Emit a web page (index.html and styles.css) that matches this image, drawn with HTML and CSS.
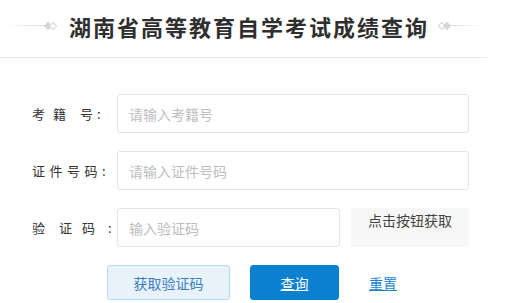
FILE: index.html
```html
<!DOCTYPE html>
<html lang="zh-CN">
<head>
<meta charset="utf-8">
<title>湖南省高等教育自学考试成绩查询</title>
<link rel="stylesheet" href="styles.css">
</head>
<body>
<div class="page">
  <header class="head">
    <span class="deco deco-left">
      <span class="line line-l"></span>
      <span class="dia dia-fill"></span>
      <span class="dia dia-out"></span>
    </span>
    <h1 class="title">湖南省高等教育自学考试成绩查询</h1>
    <span class="deco deco-right">
      <span class="dia dia-out"></span>
      <span class="dia dia-fill"></span>
      <span class="line line-r"></span>
    </span>
  </header>
  <form class="form">
    <div class="row">
      <label class="label"><span class="c c1a">考</span><span class="c c1b">籍</span><span class="c c1c">号</span><span class="colon">:</span></label>
      <input class="field" type="text" placeholder="请输入考籍号">
    </div>
    <div class="row">
      <label class="label"><span class="c c2">证</span><span class="c c2">件</span><span class="c c2">号</span><span class="c c2">码</span><span class="colon">:</span></label>
      <input class="field" type="text" placeholder="请输入证件号码">
    </div>
    <div class="row">
      <label class="label"><span class="c c3a">验</span><span class="c c3b">证</span><span class="c c3c">码</span><span class="colon">:</span></label>
      <input class="field field-short" type="text" placeholder="输入验证码">
      <div class="captcha">点击按钮获取</div>
    </div>
    <div class="actions">
      <button type="button" class="btn btn-get">获取验证码</button>
      <button type="button" class="btn btn-query">查询</button>
      <a class="reset" href="#">重置</a>
    </div>
  </form>
</div>
</body>
</html>
```
FILE: styles.css
```css
* { box-sizing: border-box; }
html, body { margin: 0; padding: 0; background: #fff; }
body {
  font-family: "Noto Sans CJK SC", "Microsoft YaHei", "Noto Sans", sans-serif;
  color: #333;
}
.page { width: 487px; }
.head {
  height: 58px;
  border-bottom: 1px solid #e8e8e8;
  display: flex;
  align-items: center;
  padding: 0 0 6px 5px;
}
.title {
  margin: 0 0 0 14px;
  font-size: 22px;
  font-weight: bold;
  letter-spacing: 2px;
  line-height: 30px;
  color: #2f2f2f;
  white-space: nowrap;
}
.deco { display: flex; align-items: center; }
.deco-right { margin-left: 11px; }
.line { display: block; height: 1px; }
.line-l { width: 40px; background: linear-gradient(to right, #fff, #d8d8d8); }
.line-r { width: 33px; background: linear-gradient(to left, #fff, #d8d8d8); }
.dia {
  display: block;
  width: 6px;
  height: 6px;
  transform: rotate(45deg);
}
.dia-fill { background: #d6d6d6; }
.dia-out { border: 1px solid #d6d6d6; background: #fff; margin: 0 -1px; }
.form { padding: 36px 0 0 32px; }
.row {
  display: flex;
  align-items: center;
  height: 39px;
  margin-bottom: 18px;
}
.label {
  width: 85px;
  display: flex;
  align-items: center;
  font-size: 13px;
  color: #333;
}
.c { display: inline-block; width: 13px; }
.c1a { margin-right: 8px; }
.c1b { margin-right: 14px; }
.c1c { margin-right: 4px; }
.c2 { margin-right: 4.5px; }
.c3a { margin-right: 14px; }
.c3b { margin-right: 10px; }
.c3c { margin-right: 13px; }
.colon { display: inline-block; }
.field {
  width: 352px;
  height: 39px;
  border: 1px solid #e5e5e5;
  border-radius: 3px;
  padding: 0 11px;
  font-family: inherit;
  font-size: 14px;
  color: #333;
  outline: none;
}
.field::placeholder { color: #bdbdbd; }
.field-short { width: 223px; }
.captcha {
  margin-left: 11px;
  width: 118px;
  height: 39px;
  background: #f7f7f7;
  border-radius: 3px;
  text-align: center;
  font-size: 14px;
  line-height: 24px;
  color: #444;
}
.actions {
  display: flex;
  align-items: center;
  padding-left: 75px;
}
.btn {
  height: 35px;
  border-radius: 3px;
  font-family: inherit;
  font-size: 14px;
  cursor: pointer;
  padding: 0;
}
.btn-get {
  width: 123px;
  background: #e7f2fb;
  border: 1px solid #b6daf2;
  color: #3c7dbf;
}
.btn-query {
  width: 89px;
  margin-left: 20px;
  background: #0a80cf;
  border: 1px solid #0a80cf;
  color: #fff;
  text-decoration: underline;
}
.reset {
  margin-left: 30px;
  font-size: 14px;
  color: #1a84d4;
  text-decoration: underline;
}
```
